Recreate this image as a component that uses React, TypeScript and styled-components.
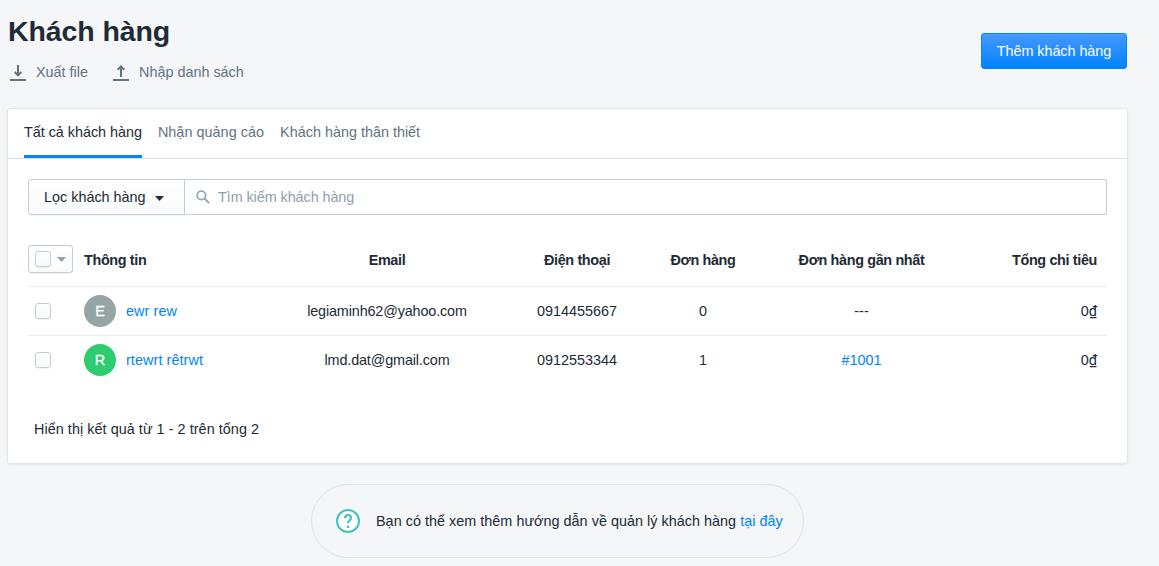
import React from "react";
import styled, { createGlobalStyle } from "styled-components";

const GlobalStyle = createGlobalStyle`
  * { box-sizing: border-box; }
  body {
    margin: 0;
    background: #f4f6f8;
    color: #212b36;
    font-family: "Liberation Sans", Arial, sans-serif;
    font-size: 14.4px;
    line-height: 20px;
  }
`;

const Page = styled.main`
  width: 1128px;
  padding-left: 7px;
`;

const Header = styled.header`
  height: 108px;
  padding-left: 1px;
  display: flex;
  justify-content: space-between;
  align-items: flex-start;
`;

const Title = styled.h1`
  margin: 0;
  padding-top: 11px;
  font-size: 28.5px;
  line-height: 40px;
  font-weight: 700;
  letter-spacing: -0.1px;
`;

const Actions = styled.div`
  display: flex;
  gap: 23px;
  padding-top: 11px;
`;

const Action = styled.a`
  display: flex;
  align-items: center;
  gap: 8px;
  color: #637381;
`;

const PrimaryButton = styled.button`
  width: 146px;
  height: 36px;
  margin: 33px 1px 0 0;
  padding: 0;
  border: 1px solid #0084ff;
  border-radius: 3px;
  background: linear-gradient(to bottom, #4797ff, #0084ff);
  box-shadow: inset 0 1px 0 #479fff;
  color: #fff;
  font: inherit;
  letter-spacing: -0.05px;
`;

const Card = styled.section`
  height: 356px;
  border: 1px solid #e1e4e8;
  border-radius: 4px;
  background: #fff;
  box-shadow: 0 1px 2px rgba(33, 43, 54, 0.08);
`;

const Tabs = styled.nav`
  display: flex;
  gap: 16px;
  height: 50px;
  padding: 0 16px;
  border-bottom: 1px solid #dfe3e8;
`;

const Tab = styled.a<{ $active?: boolean; $track?: number }>`
  height: 49px;
  padding-top: 13px;
  color: ${(p) => (p.$active ? "#212b36" : "#637381")};
  border-bottom: 3px solid ${(p) => (p.$active ? "#0084ff" : "transparent")};
  letter-spacing: ${(p) => p.$track ?? 0}px;
`;

const FilterBar = styled.div`
  display: flex;
  height: 36px;
  margin: 20px 20px 0;
`;

const FilterButton = styled.button`
  display: flex;
  align-items: center;
  gap: 9px;
  width: 157px;
  padding: 0 15px;
  border: 1px solid #c4cdd5;
  border-radius: 3px 0 0 3px;
  background: linear-gradient(to bottom, #fff, #f9fafb);
  box-shadow: 0 1px 0 rgba(22, 29, 37, 0.05);
  color: #212b36;
  font: inherit;

  svg { margin-top: 2px; }
`;

const SearchBox = styled.label`
  display: flex;
  flex: 1;
  align-items: center;
  gap: 8px;
  padding-left: 11px;
  border: 1px solid #c4cdd5;
  border-left: 0;
  border-radius: 0 3px 3px 0;
  color: #919eab;
  letter-spacing: -0.07px;
`;

const Table = styled.table`
  width: 1079px;
  margin: 18px 0 0 20px;
  border-collapse: separate;
  border-spacing: 0;
  table-layout: fixed;
`;

const Row = styled.tr`
  height: 49px;
  &:not(:last-child) > td { border-bottom: 1px solid #ebebeb; }
  &:last-child { height: 48px; }
`;

const HeadRow = styled.tr`
  height: 54px;
  > th { border-bottom: 1px solid #ebebeb; }
`;

type Align = "left" | "center" | "right";

const HeadCell = styled.th<{ $align?: Align; $flush?: boolean }>`
  padding: 0 ${(p) => (p.$flush ? 0 : 10)}px;
  text-align: ${(p) => p.$align ?? "center"};
  font-weight: 700;
  letter-spacing: -0.35px;
`;

const Cell = styled.td<{ $align?: Align; $check?: boolean; $track?: number }>`
  padding: 0 ${(p) => (p.$check ? 7 : 10)}px;
  text-align: ${(p) => p.$align ?? "center"};
  letter-spacing: ${(p) => p.$track ?? 0}px;
`;

const Checkbox = styled.span`
  display: block;
  width: 16px;
  height: 16px;
  border: 1px solid #c4cdd5;
  border-radius: 3px;
  background: linear-gradient(to bottom, #fff, #f9fafb);
  box-shadow: 0 1px 0 rgba(22, 29, 37, 0.05);
`;

const BulkSelect = styled.div`
  display: flex;
  align-items: center;
  gap: 6px;
  width: 45px;
  height: 28px;
  margin-top: -1px;
  padding-left: 6px;
  border: 1px solid #c4cdd5;
  border-radius: 3px;
  background: linear-gradient(to bottom, #fff, #f9fafb);
  box-shadow: 0 1px 0 rgba(22, 29, 37, 0.05);
`;

const Customer = styled.div`
  display: flex;
  align-items: center;
  gap: 10px;
`;

const Avatar = styled.span<{ $color: string }>`
  width: 32px;
  height: 32px;
  border-radius: 50%;
  background: ${(p) => p.$color};
  color: #fff;
  line-height: 32px;
  text-align: center;
  -webkit-text-stroke: 0.3px #fff;
`;

const Link = styled.a`
  color: #0084ff;
`;

const Currency = styled.span`
  font-family: Roboto, sans-serif;
`;

const Summary = styled.p`
  margin: 35px 0 0 26px;
  letter-spacing: 0.05px;
`;

const Help = styled.aside`
  display: flex;
  align-items: center;
  width: 493px;
  height: 74px;
  margin: 20px 0 0 304px;
  padding-left: 24px;
  gap: 16px;
  border: 1px solid #dfe3e8;
  border-radius: 37px;
  letter-spacing: 0.02px;
`;

const DownloadIcon = () => (
  <svg width="20" height="20" viewBox="0 0 20 20" fill="none" stroke="#637381" strokeWidth="2">
    <path d="M10 3v10M6.7 10 10 13.3l3.3-3.3M2 18h16" />
  </svg>
);

const UploadIcon = () => (
  <svg width="20" height="20" viewBox="0 0 20 20" fill="none" stroke="#637381" strokeWidth="2">
    <path d="M10 15V5M6.7 7.7 10 4.4l3.3 3.3M2 18h16" />
  </svg>
);

const Caret = ({ color }: { color: string }) => (
  <svg width="9" height="5" viewBox="0 0 9 5" fill={color}>
    <path d="M0 0h9L4.5 5z" />
  </svg>
);

const SearchIcon = () => (
  <svg width="14" height="14" viewBox="0 0 14 14" fill="none" stroke="#95a7b7">
    <circle cx="5.4" cy="5.4" r="4.2" strokeWidth="1.8" />
    <path d="m8.5 8.5 4.6 4.6" strokeWidth="2" />
  </svg>
);

const HelpIcon = () => (
  <svg width="24" height="24" viewBox="0 0 24 24" fill="none" stroke="#47c1bf" strokeWidth="2">
    <circle cx="12" cy="12" r="11" fill="#fff" />
    <path d="M9 9.2C9 7.2 10.3 6 12 6s3 1.2 3 2.8c0 2.4-3 2.6-3 5.4" strokeWidth="2.2" />
    <path d="M12 16.7v2.3" strokeWidth="2.4" />
  </svg>
);

const customers = [
  { initial: "E", color: "#95a5a6", name: "ewr rew", email: "legiaminh62@yahoo.com", phone: "0914455667", orders: 0, last: "", spent: "0" },
  { initial: "R", color: "#2ecc71", name: "rtewrt rêtrwt", email: "lmd.dat@gmail.com", phone: "0912553344", orders: 1, last: "#1001", spent: "0" },
];

export default function App() {
  return (
    <>
      <GlobalStyle />
      <Page>
        <Header>
          <div>
            <Title>Khách hàng</Title>
            <Actions>
              <Action><DownloadIcon />Xuất file</Action>
              <Action><UploadIcon />Nhập danh sách</Action>
            </Actions>
          </div>
          <PrimaryButton>Thêm khách hàng</PrimaryButton>
        </Header>
        <Card>
          <Tabs>
            <Tab $active $track={-0.03}>Tất cả khách hàng</Tab>
            <Tab $track={0.04}>Nhận quảng cáo</Tab>
            <Tab>Khách hàng thân thiết</Tab>
          </Tabs>
          <FilterBar>
            <FilterButton>Lọc khách hàng<Caret color="#212b36" /></FilterButton>
            <SearchBox><SearchIcon />Tìm kiếm khách hàng</SearchBox>
          </FilterBar>
          <Table>
            <colgroup>
              <col style={{ width: 46 }} />
              <col style={{ width: 203 }} />
              <col style={{ width: 220 }} />
              <col style={{ width: 160 }} />
              <col style={{ width: 92 }} />
              <col style={{ width: 225 }} />
              <col />
            </colgroup>
            <thead>
              <HeadRow>
                <HeadCell $flush><BulkSelect><Checkbox /><Caret color="#919eab" /></BulkSelect></HeadCell>
                <HeadCell $align="left">Thông tin</HeadCell>
                <HeadCell>Email</HeadCell>
                <HeadCell>Điện thoại</HeadCell>
                <HeadCell>Đơn hàng</HeadCell>
                <HeadCell>Đơn hàng gần nhất</HeadCell>
                <HeadCell $align="right">Tổng chi tiêu</HeadCell>
              </HeadRow>
            </thead>
            <tbody>
              {customers.map((c) => (
                <Row key={c.email}>
                  <Cell $check><Checkbox /></Cell>
                  <Cell $align="left" $track={0.08}>
                    <Customer><Avatar $color={c.color}>{c.initial}</Avatar><Link>{c.name}</Link></Customer>
                  </Cell>
                  <Cell $track={-0.14}>{c.email}</Cell>
                  <Cell>{c.phone}</Cell>
                  <Cell>{c.orders}</Cell>
                  <Cell>{c.last ? <Link>{c.last}</Link> : "---"}</Cell>
                  <Cell $align="right">{c.spent}<Currency>₫</Currency></Cell>
                </Row>
              ))}
            </tbody>
          </Table>
          <Summary>Hiển thị kết quả từ 1 - 2 trên tổng 2</Summary>
        </Card>
        <Help>
          <HelpIcon />
          <span>Bạn có thể xem thêm hướng dẫn về quản lý khách hàng <Link>tại đây</Link></span>
        </Help>
      </Page>
    </>
  );
}
